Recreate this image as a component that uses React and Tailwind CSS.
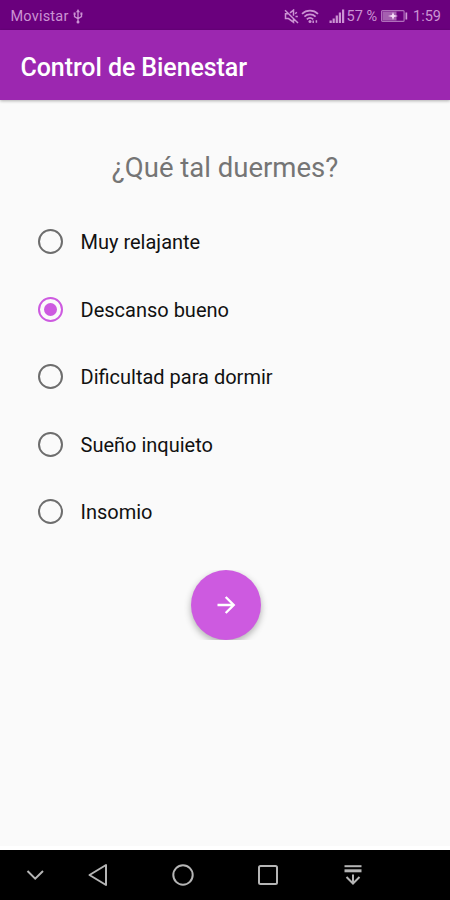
import React, { useState } from "react";

const OPTIONS = [
  "Muy relajante",
  "Descanso bueno",
  "Dificultad para dormir",
  "Sueño inquieto",
  "Insomio",
];

function UsbIcon() {
  return (
    <svg className="ml-[4px] h-[15px] w-[10px]" viewBox="0 0 10 15" fill="none" stroke="currentColor" strokeWidth="1.3">
      <path d="M5 2v11M1.5 5v2.6L5 9.8M8.5 5v2.6L5 9.8" />
      <path d="M5 0 3 3.2h4zM0.6 3.6h2v2.2h-2zM7.4 3.6h2v2.2h-2z" fill="currentColor" stroke="none" />
      <circle cx="5" cy="13" r="1.5" fill="currentColor" stroke="none" />
    </svg>
  );
}

function MutedIcon() {
  return (
    <svg className="h-[15px] w-[15px]" viewBox="0 0 15 15" fill="none" stroke="currentColor" strokeWidth="1.5">
      <path d="M1 1.2 14 14M4 4.8H1.5v4.8h3l5 3.6V9.7M6 3.8l3.5-2.7v5.6M11.2 4.7l1.6-1.5M11.5 7.5h2.3" />
    </svg>
  );
}

function WifiIcon() {
  return (
    <svg className="ml-[2px] h-[15px] w-[18px]" viewBox="0 0 18 15" fill="none" stroke="currentColor" strokeWidth="1.7">
      <path d="M1 4.8C5.5.6 12.5.6 17 4.8M3.4 7.7c3.2-3 8-3 11.2 0M5.8 10.3c1.9-1.7 4.5-1.7 6.4 0" />
      <circle cx="9" cy="12.5" r="1.5" fill="currentColor" stroke="none" />
      <path d="M12.2 14v-2.6M15.4 11.2v2.6" strokeWidth="1.5" />
    </svg>
  );
}

function SignalIcon() {
  return (
    <svg className="ml-[10px] h-[14px] w-[16px]" viewBox="0 0 16 14" fill="currentColor">
      <path d="M0.5 11.5h2.3V14H.5zM3.6 9.5h2.2V14H3.6zM6.7 6.5h2.2V14H6.7zM9.8 3.5H12V14H9.8zM13 .5h2.2V14H13z" />
    </svg>
  );
}

function BatteryIcon() {
  return (
    <svg className="ml-[4px] h-[12px] w-[27px]" viewBox="0 0 27 12">
      <rect x="0.6" y="0.6" width="22.5" height="10.8" rx="1" fill="none" stroke="#b06fbb" strokeWidth="1.2" />
      <rect x="1.5" y="1.5" width="14" height="9" fill="#a55fb0" />
      <path d="M24.5 2.5h1.7v7h-1.7z" fill="#cf9ad6" />
      <path d="m12 2 1.1 3L17 6l-3.9 1L12 10l-1.1-3L7 6l3.9-1z" fill="#f5dcf8" />
    </svg>
  );
}

function StatusBar() {
  return (
    <div className="flex h-[30px] shrink-0 items-center bg-[#6a007d] pl-[10.5px] pr-[9px] pt-[2px] text-[14.5px] text-[#cb93d3]">
      <span className="pt-[1px] tracking-[0.2px]">Movistar</span>
      <UsbIcon />
      <div className="ml-auto flex items-center">
        <MutedIcon />
        <WifiIcon />
        <SignalIcon />
        <span className="ml-[2px] pt-[1px]">57 %</span>
        <BatteryIcon />
        <span className="ml-[5px] pt-[1px]">1:59</span>
      </div>
    </div>
  );
}

function Radio({ checked }) {
  return (
    <span
      className={
        checked
          ? "flex h-[25px] w-[25px] items-center justify-center rounded-full border-2 border-[#cd5ae0]"
          : "flex h-[25px] w-[25px] items-center justify-center rounded-full border-2 border-[#6d6d6d]"
      }
    >
      {checked && <span className="h-[13px] w-[13px] rounded-full bg-[#cd5ae0]" />}
    </span>
  );
}

function NavBar() {
  return (
    <nav className="flex h-[50.5px] shrink-0 items-center bg-black pl-[26px] text-[#b5b5b5]">
      <svg className="h-[22px] w-[18px]" viewBox="0 0 18 22" fill="none" stroke="currentColor" strokeWidth="2">
        <path d="m1.5 7 7.7 7.7L17 7" />
      </svg>
      <svg className="ml-[44px] h-[24px] w-[20px]" viewBox="0 0 20 24" fill="none" stroke="currentColor" strokeWidth="2" strokeLinejoin="round">
        <path d="M18 2v20L1.5 12z" />
      </svg>
      <svg className="ml-[64px] h-[22px] w-[22px]" viewBox="0 0 22 22" fill="none" stroke="currentColor" strokeWidth="2">
        <circle cx="11" cy="11" r="9.7" />
      </svg>
      <svg className="ml-[64px] h-[20px] w-[20px]" viewBox="0 0 20 20" fill="none" stroke="currentColor" strokeWidth="2">
        <rect x="1" y="1" width="18" height="18" rx="1.5" />
      </svg>
      <svg className="ml-[66px] h-[20px] w-[18px]" viewBox="0 0 18 20" fill="none" stroke="currentColor">
        <path d="M.5 1.2h17" strokeWidth="2" />
        <path d="M.5 5.8h17" strokeWidth="3" />
        <path d="M9 9.5V18M2.5 12 9 18.5l6.5-6.5" strokeWidth="2" />
      </svg>
    </nav>
  );
}

export default function App() {
  const [selected, setSelected] = useState(1);
  return (
    <div className="flex h-[900px] w-[450px] flex-col overflow-hidden bg-[#fafafa] font-[Roboto,sans-serif]">
      <StatusBar />
      <header className="flex h-[70px] shrink-0 items-center bg-[#9c27b0] pl-[20.5px] pt-[5px] shadow-[0_1px_3px_rgba(0,0,0,0.3)]">
        <h1 className="whitespace-nowrap text-[25px] font-medium leading-[30px] tracking-[-0.08px] text-white">Control de Bienestar</h1>
      </header>
      <main className="flex flex-1 flex-col">
        <h2 className="mt-[50px] whitespace-nowrap text-center text-[27.5px] leading-[36px] text-[#757575]">¿Qué tal duermes?</h2>
        <div className="mt-[22px] flex flex-col pl-[38px]" role="radiogroup">
          {OPTIONS.map((option, i) => (
            <button
              key={option}
              type="button"
              role="radio"
              aria-checked={selected === i}
              onClick={() => setSelected(i)}
              className="flex h-[67.5px] items-center gap-[17.5px] text-left"
            >
              <Radio checked={selected === i} />
              <span className="whitespace-nowrap pt-[1px] text-[20px] leading-[24px] text-[#111]">{option}</span>
            </button>
          ))}
        </div>
        <div className="mt-[24.5px] flex h-[70px] justify-center overflow-hidden pl-[1px]">
          <button
            type="button"
            aria-label="Siguiente"
            className="flex h-[70px] w-[70px] items-center justify-center rounded-full bg-[#cd5ae0] shadow-[0_3px_7px_rgba(0,0,0,0.3)]"
          >
            <svg className="h-[20px] w-[20px]" viewBox="0 0 20 20" fill="none" stroke="white" strokeWidth="2.4">
              <path d="M1.5 10h16M9.7 2l8 8-8 8" />
            </svg>
          </button>
        </div>
        <div className="mt-auto h-[4px] bg-white" />
      </main>
      <NavBar />
    </div>
  );
}
